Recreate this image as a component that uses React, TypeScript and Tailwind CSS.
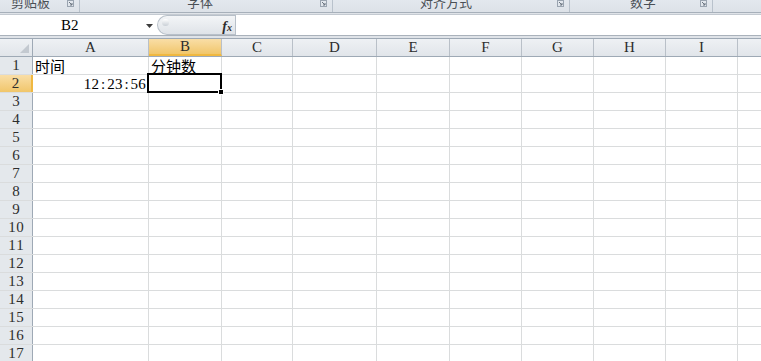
import React from "react";

const cols: { name: string; w: number }[] = [
  { name: "A", w: 116 },
  { name: "B", w: 73 },
  { name: "C", w: 71 },
  { name: "D", w: 84 },
  { name: "E", w: 73 },
  { name: "F", w: 72 },
  { name: "G", w: 72 },
  { name: "H", w: 72 },
  { name: "I", w: 72 },
  { name: "", w: 60 },
];

const serif = { fontFamily: '"Liberation Serif", "DejaVu Serif", serif' };
const cjk = { fontFamily: '"Noto Sans CJK SC", "Liberation Serif", sans-serif' };

function Launcher() {
  return (
    <svg width="7" height="7" viewBox="0 0 7 7" className="shrink-0">
      <rect x="0.5" y="0.5" width="6" height="6" fill="none" stroke="#9aa4b0" strokeWidth="1" />
      <path d="M2 2 L5 5 M5 3 L5 5 L3 5" stroke="#6b7580" strokeWidth="1" fill="none" />
    </svg>
  );
}

function RibbonGroup({ w, label, pad }: { w: number; label: string; pad: string }) {
  return (
    <div className="relative h-full border-r border-[#b9c2cc] shrink-0" style={{ width: w }}>
      <div className={`absolute left-0 right-0 -top-[6px] flex ${pad} leading-none`}>
        <span className="text-[13px] leading-[15px] text-[#4a4f55]" style={cjk}>
          {label}
        </span>
      </div>
      <div className="absolute right-[5px] top-[0px]">
        <Launcher />
      </div>
    </div>
  );
}

function MonoText({ text, cw }: { text: string; cw: number }) {
  return (
    <span className="inline-flex">
      {text.split("").map((ch, i) => (
        <span key={i} className="inline-block text-center" style={{ width: cw }}>
          {ch}
        </span>
      ))}
    </span>
  );
}

function Cell({
  w,
  children,
  align = "left",
  selected = false,
}: {
  w: number;
  children?: React.ReactNode;
  align?: "left" | "right";
  selected?: boolean;
}) {
  return (
    <div
      className={`relative h-full shrink-0 border-r border-[#dadcdd] flex items-end overflow-visible ${
        align === "right" ? "justify-end" : "justify-start"
      }`}
      style={{ width: w }}
    >
      {children}
      {selected && (
        <div className="absolute -left-[2px] -top-[2px] -right-[1px] -bottom-[1px] border-2 border-black z-10">
          <div className="absolute -right-[4px] -bottom-[4px] w-[6px] h-[6px] bg-black border border-white" />
        </div>
      )}
    </div>
  );
}

export default function App() {
  const rows = Array.from({ length: 17 }, (_, i) => i + 1);
  return (
    <div className="w-[761px] h-[361px] overflow-hidden bg-white relative select-none">
      {/* Ribbon bottom strip */}
      <div className="h-[13px] flex bg-gradient-to-b from-[#e3e8ee] to-[#dde2e8] border-b border-[#a7b0ba] overflow-hidden">
        <RibbonGroup w={80} label="剪贴板" pad="pl-[11px]" />
        <RibbonGroup w={253} label="字体" pad="pl-[107px]" />
        <RibbonGroup w={237} label="对齐方式" pad="pl-[87px]" />
        <RibbonGroup w={143} label="数字" pad="pl-[60px]" />
        <div className="flex-1" />
      </div>

      {/* Formula bar */}
      <div className="h-[25px] bg-[#dfe3e8] pt-[1px] pb-[2px] flex flex-col">
        <div className="flex h-full border-t border-[#c4cad1] border-b border-b-[#aab2bb] bg-white">
          <div className="w-[157px] h-full flex items-center relative shrink-0">
            <span className="absolute left-[61px] top-[1px] text-[15px] leading-[18px] text-black" style={serif}>
              B2
            </span>
            <svg width="7" height="4" viewBox="0 0 7 4" className="absolute left-[146px] top-[9px]">
              <path d="M0 0 L7 0 L3.5 4 Z" fill="#3c3c3c" />
            </svg>
          </div>
          <div className="w-[78px] h-full shrink-0 flex items-center relative bg-gradient-to-b from-[#f3f5f7] to-[#dfe3e8] rounded-l-[10px] border border-[#b8c0c9] border-r-0">
            <div className="absolute left-[4px] top-[3px] w-[7px] h-[7px] rounded-full bg-gradient-to-b from-[#ffffff] to-[#c9cfd6]" />
            <span
              className="absolute right-[3px] top-[0px] text-[14px] italic font-bold text-[#2c2c2c]"
              style={serif}
            >
              f<span className="text-[10px]">x</span>
            </span>
          </div>
          <div className="flex-1 border-l border-[#b8c0c9]" />
        </div>
      </div>

      {/* Column header row */}
      <div className="h-[19px] flex border-t border-[#9ea9b5] border-b border-b-[#9ea9b5] bg-gradient-to-b from-[#eef1f4] to-[#e1e5ea]">
        <div className="w-[33px] h-full shrink-0 border-r border-[#9ea9b5] relative">
          <svg width="9" height="9" viewBox="0 0 9 9" className="absolute right-[3px] bottom-[3px]">
            <path d="M9 0 L9 9 L0 9 Z" fill="#c3c9d0" />
          </svg>
        </div>
        {cols.map((c) => (
          <div
            key={c.name + c.w}
            className={`h-full shrink-0 border-r border-[#b9c0c8] flex items-center justify-center text-[15px] leading-none text-[#2d2d2d] ${
              c.name === "B" ? "bg-gradient-to-b from-[#f9dea6] to-[#f1c66a] border-b-2 border-b-[#f0b840]" : ""
            }`}
            style={{ width: c.w, ...serif }}
          >
            {c.name}
          </div>
        ))}
      </div>

      {/* Rows */}
      {rows.map((r) => (
        <div key={r} className="h-[18px] flex border-b border-[#dadcdd]">
          <div
            className={`w-[33px] h-full shrink-0 border-r border-[#9ea9b5] flex items-center justify-center text-[15px] leading-none text-[#2d2d2d] ${
              r === 2
                ? "bg-gradient-to-b from-[#f9dea6] to-[#f1c66a] border-r-2 border-r-[#f0b840]"
                : "bg-[#e4e8ec]"
            }`}
            style={serif}
          >
            <MonoText text={String(r)} cw={8} />
          </div>
          {cols.map((c) => {
            let content: React.ReactNode = null;
            let align: "left" | "right" = "left";
            if (r === 1 && c.name === "A")
              content = (
                <span className="text-[15px] leading-[17px] pl-[2px] text-black" style={cjk}>
                  时间
                </span>
              );
            if (r === 1 && c.name === "B")
              content = (
                <span className="text-[15px] leading-[17px] pl-[2px] text-black whitespace-nowrap" style={cjk}>
                  分钟数
                </span>
              );
            if (r === 2 && c.name === "A") {
              align = "right";
              content = (
                <span className="text-[15px] leading-[16px] pr-[2px] text-black" style={serif}>
                  <MonoText text="12:23:56" cw={7.8} />
                </span>
              );
            }
            return (
              <Cell key={c.name + c.w} w={c.w} align={align} selected={r === 2 && c.name === "B"}>
                {content}
              </Cell>
            );
          })}
        </div>
      ))}
    </div>
  );
}
